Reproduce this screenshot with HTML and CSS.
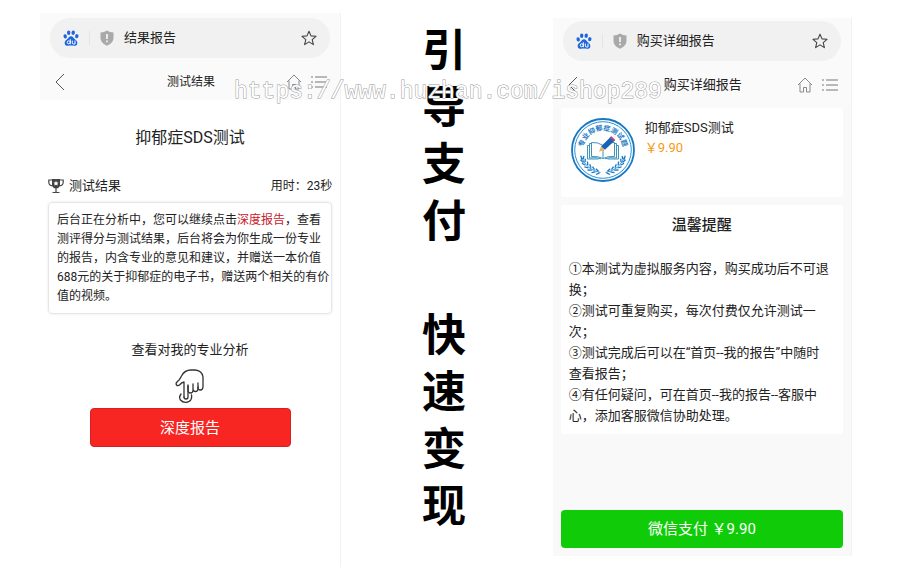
FILE: index.html
```
<!DOCTYPE html>
<html lang="zh-CN">
<head>
<meta charset="utf-8">
<meta name="viewport" content="width=device-width, initial-scale=1">
<title>引导支付 快速变现</title>
<link rel="stylesheet" href="styles.css">
</head>
<body>
<svg class="defs" aria-hidden="true">
  <symbol id="paw" viewBox="0 0 16 16">
    <g fill="#1f66dc">
      <ellipse cx="2.2" cy="6.4" rx="1.7" ry="2.1" transform="rotate(-12 2.2 6.4)"/>
      <ellipse cx="5.7" cy="2.7" rx="1.7" ry="2.2"/>
      <ellipse cx="10.2" cy="2.7" rx="1.7" ry="2.2" transform="rotate(10 10.2 2.7)"/>
      <ellipse cx="13.8" cy="6.2" rx="1.7" ry="2.1" transform="rotate(12 13.8 6.2)"/>
      <path d="M8 6.2c1.8 0 2.500 1.700 3.700 2.800 1.300 1.200 2.900 2.200 2.600 4.400-.3 2.200-2.100 2.500-3.400 2.300-1-.1-1.900-.3-2.900-.3s-1.900.2-2.900.3c-1.300.2-3.100-.1-3.400-2.300-.3-2.200 1.300-3.200 2.600-4.400C5.500 7.900 6.200 6.200 8 6.200z"/>
    </g>
    <g fill="none" stroke="#fff" stroke-width="1">
      <circle cx="5.700" cy="12.300" r="1.500"/>
      <path d="M7.300 9.200v5M9.300 10.600v2.200q0 1.200 1.200 1.200h1.500v-3.400"/>
    </g>
  </symbol>
  <symbol id="shield" viewBox="0 0 14 16">
    <path d="M7 .5c2 1.300 4 1.900 6.500 2v5.300c0 3.800-2.700 6.200-6.500 7.900C3.200 14 .5 11.600.5 7.800V2.500C3 2.400 5 1.800 7 .5z" fill="#a9a9a9"/>
    <path d="M7 4v5M7 10.500v1.800" stroke="#fff" stroke-width="1.500"/>
  </symbol>
  <symbol id="star" viewBox="0 0 16 16">
    <path d="M8 1.200l2 4.700 5 .4-3.800 3.300 1.200 5L8 11.900l-4.400 2.700 1.200-5L1 6.300l5-.4z" fill="none" stroke="#444" stroke-width="1.100" stroke-linejoin="round"/>
  </symbol>
  <symbol id="back" viewBox="0 0 10 18">
    <path d="M9 1L1 9l8 8" fill="none" stroke="#555" stroke-width="1"/>
  </symbol>
  <symbol id="home" viewBox="0 0 16 16">
    <path d="M1 8l7-7 7 7M3 6.500V15h3.500v-4.500h3V15H13V6.500" fill="none" stroke="#888" stroke-width="1"/>
  </symbol>
  <symbol id="list" viewBox="0 0 16 14">
    <path d="M4 2h12M4 7h12M4 12h12M0 2h2M0 7h2M0 12h2" fill="none" stroke="#777" stroke-width="1"/>
  </symbol>
</svg>

<main class="poster">
  <section class="phone phone-result">
    <header class="top">
      <div class="address">
        <svg class="icon-16"><use href="#paw"/></svg>
        <span class="divider"></span>
        <svg class="icon-shield"><use href="#shield"/></svg>
        <span class="address-title">结果报告</span>
        <button class="icon-button" aria-label="收藏"><svg class="icon-16"><use href="#star"/></svg></button>
      </div>
      <nav class="bar">
        <a href="#" aria-label="返回"><svg class="icon-back"><use href="#back"/></svg></a>
        <span class="bar-title">测试结果</span>
        <span class="bar-links">
          <a href="#" aria-label="首页"><svg class="icon-16"><use href="#home"/></svg></a>
          <a href="#" aria-label="菜单"><svg class="icon-list"><use href="#list"/></svg></a>
        </span>
      </nav>
    </header>
    <h1 class="test-name">抑郁症SDS测试</h1>
    <div class="result-head">
      <svg class="icon-16" viewBox="0 0 16 16">
        <path d="M4 1h8v6.500q-1 3-4 3t-4-3z" fill="#444"/>
        <path d="M4 2H.8v2.500Q1 7.500 4.500 8M12 2h3.200v2.500Q15 7.500 11.500 8M8 10v4M4.500 14.500h7" fill="none" stroke="#444" stroke-width="1.200"/>
        <path d="M8 2.700l.8 1.700 1.800.2-1.300 1.200.4 1.800L8 6.700l-1.700.9.400-1.800-1.300-1.200 1.800-.2z" fill="#fff"/>
      </svg>
      <h2 class="result-title">测试结果</h2>
      <span class="time">用时：23秒</span>
    </div>
    <p class="result-box">后台正在分析中，您可以继续点击<a class="report-link" href="#">深度报告</a>，查看<br>测评得分与测试结果，后台将会为你生成一份专业<br>的报告，内含专业的意见和建议，并赠送一本价值<br>688元的关于抑郁症的电子书，赠送两个相关的有价<br>值的视频。</p>
    <p class="hint">查看对我的专业分析</p>
    <svg class="hand" viewBox="0 0 30 34" aria-hidden="true">
      <g fill="none" stroke="#333" stroke-width="1.300" stroke-linecap="round" stroke-linejoin="round">
        <path d="M9 28V13q-2.500.500-4 2.500Q3 17.500 1.500 16 .5 14.500 2 13q3-2.500 4.500-6Q9.500 1 16 1h4q7 .500 8 7v10q-.200 3-2.700 3-2.300 0-2.300-2.500V14"/>
        <path d="M23 18v2q-.200 2.500-2.500 2.500T18 20v-5M18 20v1.500Q17.800 24 15.500 24T13 21.500V16"/>
        <path d="M13 17v11q0 2-2 2t-2-2"/>
        <path d="M6 25q-2.500 3.500-.5 6 2.200 2.500 5.500 2.300 3.500 0 5-2.800 1-2 .5-4.500"/>
      </g>
    </svg>
    <button class="report-button">深度报告</button>
  </section>

  <div class="slogan">
    <p>引导支付</p>
    <p>快速变现</p>
  </div>

  <section class="phone phone-pay">
    <header class="top">
      <div class="address">
        <svg class="icon-16"><use href="#paw"/></svg>
        <span class="divider"></span>
        <svg class="icon-shield"><use href="#shield"/></svg>
        <span class="address-title">购买详细报告</span>
        <button class="icon-button" aria-label="收藏"><svg class="icon-16"><use href="#star"/></svg></button>
      </div>
      <nav class="bar">
        <a href="#" aria-label="返回"><svg class="icon-back"><use href="#back"/></svg></a>
        <span class="bar-title">购买详细报告</span>
        <span class="bar-links">
          <a href="#" aria-label="首页"><svg class="icon-16"><use href="#home"/></svg></a>
          <a href="#" aria-label="菜单"><svg class="icon-list"><use href="#list"/></svg></a>
        </span>
      </nav>
    </header>
    <article class="card product">
      <svg class="badge" viewBox="0 0 64 64">
        <defs>
          <path id="arc" d="M12.500 28a20 20 0 0 1 39 0"/>
          <g id="laurel" fill="none" stroke="#1678c4" stroke-width="1.300">
            <path d="M10.500 39q5 13 19 15.500" stroke-width=".8"/>
            <path d="M10.800 41.500l-1-3.800M12.500 44.500l-3-2.800M14.500 47.300l-3.600-2M17.500 50l-4-1.200M20.800 52.200l-4.200-.2M24.500 53.800l-4 .8M28.500 54.800l-3.500 1.700M12 41.300l1-3.300M14 44.300l.3-3.700M16.800 47.200l-.4-3.700M20 49.700l-1.300-3.400M23.500 51.700l-2-3M27.500 53.200l-2.700-2.500"/>
          </g>
        </defs>
        <circle cx="32" cy="32" r="31" fill="#fff" stroke="#1678c4" stroke-width="1.800"/>
        <circle cx="32" cy="32" r="28.300" fill="none" stroke="#2b93d4" stroke-width="1"/>
        <text class="badge-text"><textPath href="#arc" startOffset="50%">专业抑郁症测试题</textPath></text>
        <use href="#laurel"/>
        <use href="#laurel" transform="matrix(-1 0 0 1 64 0)"/>
        <g fill="none" stroke="#3a94bd" stroke-width="1">
          <path d="M32 27.500v13M32 27.500q-4.500-3.500-11.500-3v14q7-.5 11.500 2 4.500-2.500 11.500-2v-14q-7-.5-11.500 3M20.500 25.500h-2V40q7-1 11.500.8M43.500 25.500h2V40q-7-1-11.500.8M18.500 27.500h-2V41h11M45.500 27.500h2V41h-11"/>
        </g>
        <path d="M30 28.500L40 18.500l4 3.700-10 9.500z" fill="#1763b8"/>
        <path d="M30 28.500l-2 5.200 6-2z" fill="#e9b45c"/>
        <path d="M38.700 19.800l1.600-1.600 4 3.800-1.600 1.500z" fill="#b84a68"/>
      </svg>
      <div>
        <h2 class="product-name">抑郁症SDS测试</h2>
        <p class="price">￥9.90</p>
      </div>
    </article>
    <article class="card notice">
      <h2 class="notice-title">温馨提醒</h2>
      <p>①本测试为虚拟服务内容，购买成功后不可退换；</p>
      <p>②测试可重复购买，每次付费仅允许测试一<br>次；</p>
      <p>③测试完成后可以在“首页--我的报告”中随时<br>查看报告；</p>
      <p>④有任何疑问，可在首页--我的报告--客服中<br>心，添加客服微信协助处理。</p>
    </article>
    <button class="pay-button">微信支付 ￥9.90</button>
  </section>
  <span class="watermark">https://www.huzhan.com/ishop289</span>
</main>
</body>
</html>
```
FILE: styles.css
```
* {
  box-sizing: border-box;
}

body {
  margin: 0;
  background: #fff;
  color: #222;
  font: 13px/20px Roboto, "Noto Sans CJK SC", sans-serif;
}

h1, h2, p {
  margin: 0;
  font-weight: 400;
}

a {
  color: inherit;
  text-decoration: none;
}

button {
  padding: 0;
  border: 0;
  background: none;
  color: inherit;
  font: inherit;
}

svg {
  display: block;
}

.defs {
  position: absolute;
  width: 0;
  height: 0;
}

.icon-16 {
  width: 16px;
  height: 16px;
}

.icon-shield {
  width: 14px;
  height: 16px;
}

.icon-back {
  width: 10px;
  height: 18px;
}

.icon-list {
  width: 16px;
  height: 14px;
}

.poster {
  position: relative;
  display: grid;
  grid-template-columns: 300fr 212fr 300fr;
  min-height: 100vh;
  padding: 0 48px 0 40px;
}

.phone {
  display: flex;
  flex-direction: column;
  border-right: 1px solid #f2f2f2;
}

.phone-result {
  margin: 13px 0 9px;
}

.phone-pay {
  margin: 18px 0 20px;
  padding-bottom: 8px;
  background: #f9f9f9;
}

.top {
  padding: 5px 10px 0;
  background: #fafafa;
}

.phone-pay .top {
  padding-top: 3px;
}

.address {
  display: flex;
  align-items: center;
  height: 40px;
  padding: 0 13px;
  border-radius: 20px;
  background: #f1f1f1;
}

.divider {
  width: 1px;
  height: 14px;
  margin: 0 10px;
  background: #e4e4e4;
}

.address-title {
  flex: 1;
  margin-left: 10px;
}

.bar {
  display: grid;
  grid-template-columns: 1fr auto 1fr;
  align-items: center;
  height: 42px;
  padding: 6px 3px 0 5px;
}

.phone-pay .bar {
  height: 47px;
  padding-top: 0;
}

.phone-result .bar-title {
  font-size: 12px;
}

.bar-links {
  display: flex;
  align-items: center;
  justify-content: flex-end;
  gap: 9px;
}

.test-name {
  margin-top: 26px;
  font-size: 16px;
  line-height: 24px;
  text-align: center;
}

.result-head {
  display: flex;
  align-items: center;
  gap: 5px;
  margin: 26px 8px 6px;
}

.result-title {
  flex: 1;
  font-size: 13px;
}

.time {
  font-size: 12px;
}

.result-box {
  margin: 0 8px;
  padding: 8px 2px 7px 8px;
  border: 1px solid #e6e6e6;
  border-radius: 4px;
  box-shadow: 0 0 3px #e8e8e8;
  font-size: 12px;
  line-height: 19px;
  white-space: nowrap;
}

.report-link {
  color: #c8202c;
}

.hint {
  margin-top: 26px;
  text-align: center;
}

.hand {
  align-self: center;
  width: 30px;
  height: 34px;
  margin: 9px 0 5px;
}

.report-button {
  align-self: center;
  width: 67%;
  height: 39px;
  border: 1px solid #d81f22;
  border-radius: 4px;
  background: #f82622;
  color: #fff;
  font-size: 15px;
}

.slogan {
  display: flex;
  flex-direction: column;
  align-items: center;
  gap: 57px;
  padding: 19px 6px 0 0;
  color: #000;
  font: 700 44px/57px "Noto Sans CJK SC", sans-serif;
}

.slogan p {
  width: 1em;
  font-weight: 700;
  word-break: break-all;
}

.card {
  margin: 0 8px 8px;
  border-radius: 3px;
  background: #fff;
}

.product {
  display: flex;
  gap: 10px;
  padding: 10px 10px 15px;
}

.badge {
  width: 64px;
  height: 64px;
}

.badge-text {
  fill: #1678c4;
  font: 700 7px "Noto Sans CJK SC", sans-serif;
  text-anchor: middle;
}

.product-name {
  font-size: 13px;
}

.price {
  color: #f59a12;
}

.notice {
  padding: 8px 8px;
  line-height: 21px;
}

.notice-title {
  margin-bottom: 20px;
  font-size: 15px;
  font-weight: 500;
  line-height: 25px;
  text-align: center;
}

.pay-button {
  height: 38px;
  margin: auto 8px 0;
  border-radius: 4px;
  background: #10cc08;
  color: #fff;
  font-size: 15px;
}

.watermark {
  position: absolute;
  top: 79px;
  left: 26%;
  color: #fff;
  font: 23px/26px "Liberation Mono", monospace;
  paint-order: stroke fill;
  pointer-events: none;
  -webkit-text-stroke: 1px #999;
}
```
